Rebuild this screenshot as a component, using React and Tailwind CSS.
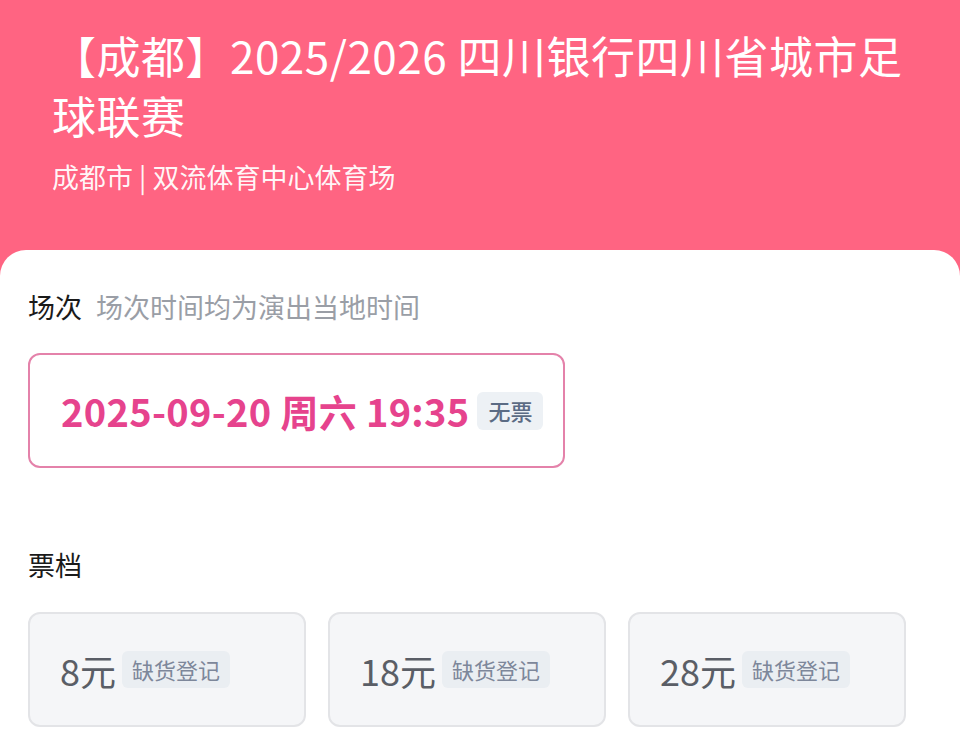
const F = { fontFamily: '"Noto Sans CJK SC", "Noto Sans", sans-serif' };

export default function App() {
  const tickets = ["8元", "18元", "28元"];
  return (
    <div className="min-h-screen flex flex-col bg-[#ff6482]" style={F}>
      <div className="h-[250px] pl-[52px] pr-[30px] pt-[25px] text-white">
        <h1 className="text-[44px] leading-[60px] font-normal tracking-[0.5px]">【成都】2025/2026 四川银行四川省城市足球联赛</h1>
        <div className="mt-[14px] text-[27px] leading-[36px] text-white/95">成都市 | 双流体育中心体育场</div>
      </div>
      <div className="flex-1 bg-white rounded-t-[26px] px-[28px] pt-[39px] pb-8">
        <div className="flex items-center gap-[14px] text-[27px] leading-[36px]">
          <span className="text-[#1a1a1a]">场次</span>
          <span className="text-[#9a9ea6]">场次时间均为演出当地时间</span>
        </div>
        <div className="mt-[28px] w-[537px] h-[115px] border-2 border-[#e482aa] rounded-[12px] flex items-center pl-[31px]">
          <span className="text-[38px] leading-none font-semibold tracking-[0.3px] text-[#e6438d]">2025-09-20 周六 19:35</span>
          <span className="ml-[8px] h-[38px] px-[11px] flex items-center rounded-[6px] bg-[#edf1f5] text-[#5b6b84] text-[22px] font-medium">无票</span>
        </div>
        <div className="mt-[79px] text-[27px] leading-[36px] text-[#1a1a1a]">票档</div>
        <div className="mt-[29px] flex gap-[22px]">
          {tickets.map((t) => (
            <div key={t} className="w-[278px] h-[115px] rounded-[12px] border-2 border-[#e3e4e7] bg-[#f5f6f8] flex items-center pl-[30px]">
              <span className="text-[36px] leading-none text-[#5a5e66]">{t}</span>
              <span className="ml-[6px] h-[37px] px-[10px] flex items-center rounded-[6px] bg-[#eaeef2] text-[#7d879a] text-[22px]">缺货登记</span>
            </div>
          ))}
        </div>
      </div>
    </div>
  );
}
